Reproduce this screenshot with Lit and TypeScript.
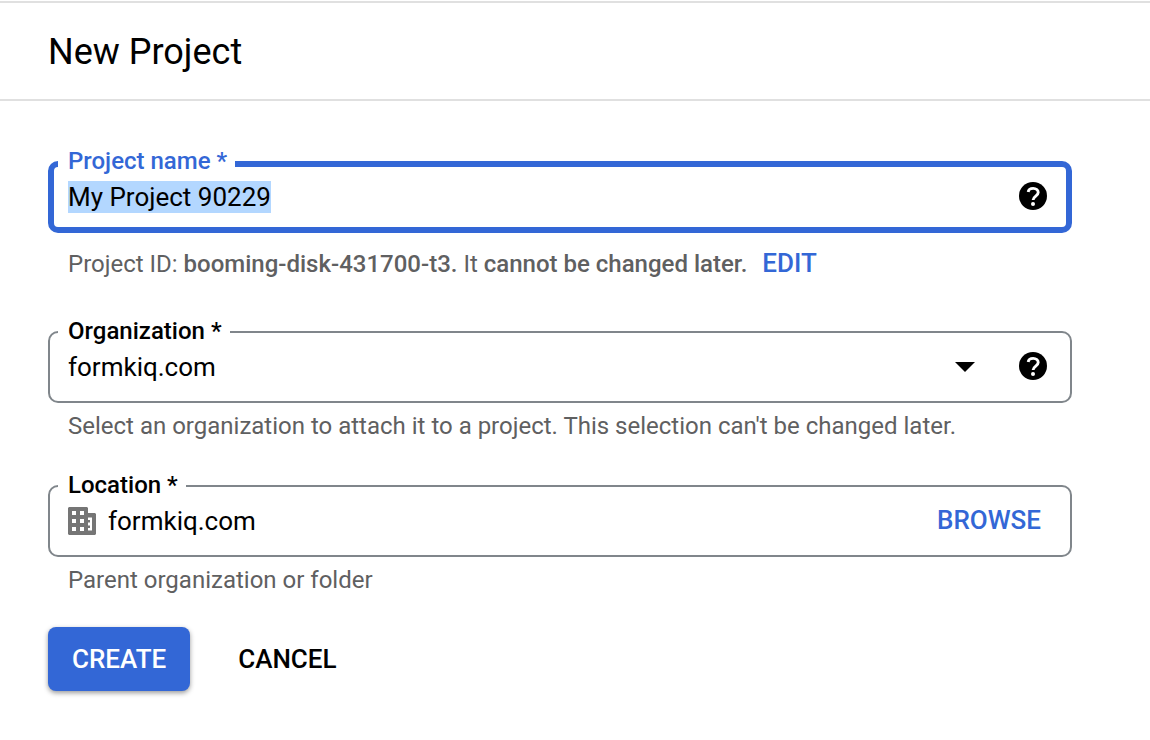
import { LitElement, html, css, svg } from "lit";
import { customElement, query } from "lit/decorators.js";

const helpIcon = svg`
  <circle cx="14" cy="14" r="14" />
  <path d="M9.2 10C9.5 7.7 11.4 6.4 14.2 6.4c3 0 5 1.7 5 4.2 0 3.4-5.1 3.6-5.1 7.4" fill="none" stroke="#fff" stroke-width="2.9" />
  <circle cx="14" cy="22" r="2" fill="#fff" />`;

@customElement("app-root")
export class AppRoot extends LitElement {
  static styles = css`
    :host {
      display: block;
      font-family: Roboto, "Liberation Sans", sans-serif;
      color: #000;
      --blue: #3367d6;
      --outline: #80868b;
      --hint: #5f6061;
    }
    * {
      box-sizing: border-box;
    }
    .header {
      margin-top: 1px;
      padding: 25px 48px 23px;
      border-top: 2px solid #e0e0e0;
      border-bottom: 2px solid #e0e0e0;
    }
    .title {
      margin: 0;
      font-size: 36px;
      font-weight: 400;
      line-height: 48px;
    }
    .form {
      padding: 48px 78px 48px 48px;
    }
    .field {
      min-width: 0;
      margin: 0;
      padding: 6px 23px 18px 8px;
      border: 2px solid var(--outline);
      border-radius: 10px;
    }
    .field.active {
      padding: 2px 19px 14px 4px;
      border: 6px solid var(--blue);
    }
    .legend {
      padding: 0 8px 2px 10px;
      font-size: 24px;
      font-weight: 500;
      line-height: 24px;
    }
    .active .legend {
      padding-bottom: 6px;
      color: var(--blue);
    }
    .row {
      display: flex;
      align-items: center;
      height: 32px;
      padding-left: 10px;
    }
    .control {
      flex: 1;
      min-width: 0;
      width: 100%;
      height: 32px;
      margin: 0;
      padding: 0;
      border: 0;
      outline: 0;
      appearance: none;
      background: transparent;
      color: inherit;
      font: 400 26px/32px Roboto, "Liberation Sans", sans-serif;
    }
    .control::selection {
      background: #b3d7ff;
      color: #000;
    }
    .dropdown {
      flex: 1;
      display: grid;
      align-items: center;
      margin-right: 44px;
    }
    .dropdown > * {
      grid-area: 1 / 1;
    }
    .arrow {
      justify-self: end;
      width: 20px;
      height: 10px;
      pointer-events: none;
    }
    .icon-button,
    .text-button {
      margin: 0;
      padding: 0;
      border: 0;
      background: none;
      color: inherit;
      cursor: pointer;
    }
    .icon-button {
      padding-bottom: 2px;
    }
    .icon {
      display: block;
      width: 28px;
      height: 28px;
    }
    .building {
      margin-right: 12px;
      fill: #757575;
    }
    .text-button {
      font: 500 26px/32px Roboto, "Liberation Sans", sans-serif;
    }
    .link {
      color: var(--blue);
    }
    .browse {
      padding: 0 6px 2px 0;
    }
    .hint {
      margin: 7px 0 0;
      padding-left: 20px;
      color: var(--hint);
      font-size: 24px;
      line-height: 32px;
    }
    .hint b {
      font-weight: 500;
    }
    .id-hint {
      display: flex;
      align-items: baseline;
      gap: 15px;
      margin-top: 14px;
    }
    .organization {
      margin-top: 39px;
    }
    .location {
      margin-top: 31px;
    }
    .actions {
      display: flex;
      gap: 48px;
      margin-top: 31px;
    }
    .create {
      padding: 16px 24px;
      border-radius: 8px;
      background: var(--blue);
      color: #fff;
      box-shadow: 0 2px 5px rgba(0, 0, 0, 0.4);
    }
  `;

  @query("#name") private nameInput!: HTMLInputElement;

  firstUpdated() {
    this.nameInput.focus();
    this.nameInput.select();
  }

  render() {
    return html`
      <header class="header"><h1 class="title">New Project</h1></header>
      <form class="form" @submit=${(e: Event) => e.preventDefault()}>
        <fieldset class="field active">
          <legend class="legend"><label for="name">Project name *</label></legend>
          <div class="row">
            <input class="control" id="name" type="text" value="My Project 90229" />
            <button class="icon-button" type="button" aria-label="Help">
              <svg class="icon" viewBox="0 0 28 28">${helpIcon}</svg>
            </button>
          </div>
        </fieldset>
        <div class="hint id-hint">
          <span>Project ID: <b>booming-disk-431700-t3.</b> It <b>cannot be changed later.</b></span>
          <button class="text-button link" type="button">EDIT</button>
        </div>

        <fieldset class="field organization">
          <legend class="legend"><label for="organization">Organization *</label></legend>
          <div class="row">
            <div class="dropdown">
              <select class="control" id="organization">
                <option>formkiq.com</option>
              </select>
              <svg class="arrow" viewBox="0 0 20 10"><path d="M0 0h20L10 10z" /></svg>
            </div>
            <button class="icon-button" type="button" aria-label="Help">
              <svg class="icon" viewBox="0 0 28 28">${helpIcon}</svg>
            </button>
          </div>
        </fieldset>
        <p class="hint">
          Select an organization to attach it to a project. This selection can't be changed later.
        </p>

        <fieldset class="field location">
          <legend class="legend"><label for="location">Location *</label></legend>
          <div class="row">
            <svg class="icon building" viewBox="0 0 28 28">
              <path fill-rule="evenodd" d="M1 0h18l1 1v5h7l1 1v20l-1 1H1l-1-1V1zM4 4v4h4V4zM12 4v4h4V4zM4 12v4h4v-4zM12 12v4h4v-4zM4 20v4h4v-4zM12 20v4h4v-4zM20 10.5v2.5h2v2.5h-2v3h2V21h-2v2.5h4v-13z" />
            </svg>
            <input class="control" id="location" type="text" value="formkiq.com" />
            <button class="text-button link browse" type="button">BROWSE</button>
          </div>
        </fieldset>
        <p class="hint">Parent organization or folder</p>

        <div class="actions">
          <button class="text-button create" type="submit">CREATE</button>
          <button class="text-button" type="button">CANCEL</button>
        </div>
      </form>
    `;
  }
}
